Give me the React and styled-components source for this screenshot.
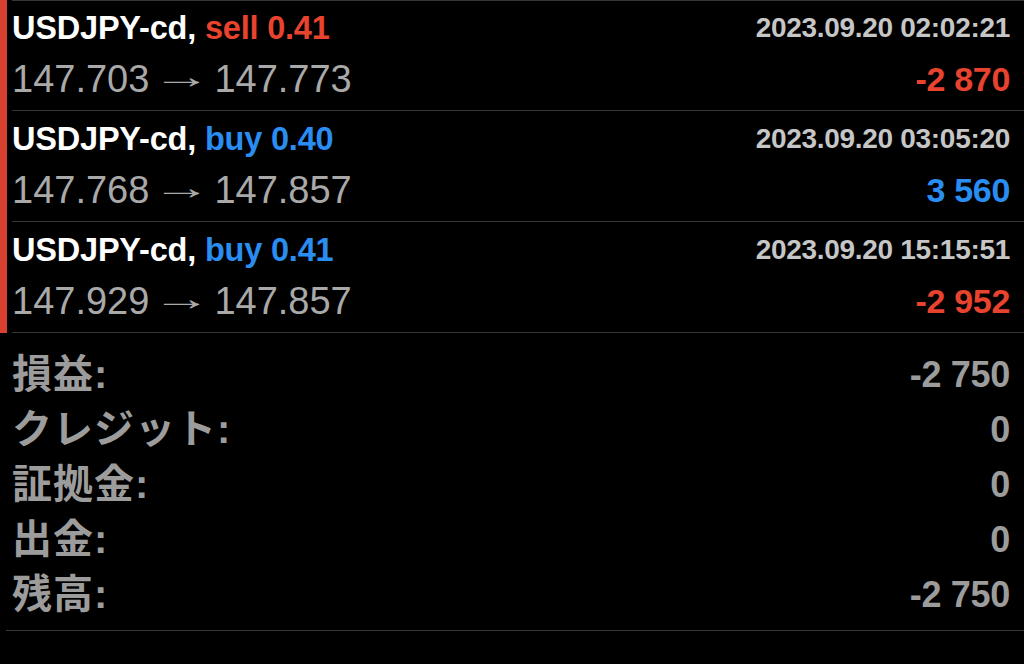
import React from 'react';
import styled, { createGlobalStyle } from 'styled-components';

const positions = [
  { symbol: 'USDJPY-cd', side: 'sell', volume: '0.41', time: '2023.09.20 02:02:21', open: '147.703', close: '147.773', profit: '-2 870' },
  { symbol: 'USDJPY-cd', side: 'buy', volume: '0.40', time: '2023.09.20 03:05:20', open: '147.768', close: '147.857', profit: '3 560' },
  { symbol: 'USDJPY-cd', side: 'buy', volume: '0.41', time: '2023.09.20 15:15:51', open: '147.929', close: '147.857', profit: '-2 952' },
];

const summary = [
  { label: '損益:', value: '-2 750' },
  { label: 'クレジット:', value: '0' },
  { label: '証拠金:', value: '0' },
  { label: '出金:', value: '0' },
  { label: '残高:', value: '-2 750' },
];

function App() {
  return (
    <>
      <GlobalStyle />
      <Page>
        <List>
          {positions.map((p, i) => (
            <Position key={i}>
              <Inner $first={i === 0}>
                <Line $h={50}>
                  <Title>
                    {p.symbol}, <Side $buy={p.side === 'buy'}>{p.side} {p.volume}</Side>
                  </Title>
                  <Time>{p.time}</Time>
                </Line>
                <Line $h={52}>
                  <Prices>
                    <span>{p.open}</span>
                    <Arrow>→</Arrow>
                    <span>{p.close}</span>
                  </Prices>
                  <Profit $neg={p.profit.startsWith('-')}>{p.profit}</Profit>
                </Line>
              </Inner>
            </Position>
          ))}
        </List>
        <Summary>
          {summary.map((s, i) => (
            <SummaryRow key={i}>
              <Label>{s.label}</Label>
              <Value>{s.value}</Value>
            </SummaryRow>
          ))}
        </Summary>
      </Page>
    </>
  );
}

export default App;

// **************Styling***************

const GlobalStyle = createGlobalStyle`
  body {
    margin: 0;
    background: #000;
    font-family: "Liberation Sans", Arial, sans-serif;
  }
`;

const Page = styled.div`
  width: 1024px;
  height: 664px;
  background: #000;
  overflow: hidden;
`;

const List = styled.div`
  display: flex;
  flex-direction: column;
`;

const Position = styled.div`
  border-left: 7px solid #d8402f;
`;

const Inner = styled.div`
  margin-left: 5px;
  padding: ${props => props.$first ? '2px' : '3px'} 14px 5px 0;
  border-top: ${props => props.$first ? '1px solid #363636' : 'none'};
  border-bottom: 1px solid #363636;
  display: flex;
  flex-direction: column;
`;

const Line = styled.div`
  height: ${props => props.$h}px;
  display: flex;
  align-items: center;
  justify-content: space-between;
`;

const Title = styled.div`
  color: #fff;
  font-size: 32.5px;
  font-weight: 700;
  letter-spacing: -0.2px;
  white-space: nowrap;
`;

const Side = styled.span`
  color: ${props => props.$buy ? '#2a8df2' : '#e8432f'};
`;

const Time = styled.div`
  color: #c6c6c6;
  font-size: 28px;
  font-weight: 700;
  letter-spacing: -0.3px;
`;

const Prices = styled.div`
  color: #a9a9a9;
  font-size: 38px;
  font-weight: 400;
  white-space: nowrap;
  display: flex;
  align-items: center;
`;

const Arrow = styled.span`
  display: inline-block;
  width: 65px;
  text-align: center;
  font-size: 34px;
  transform: translateY(-3px) scaleX(1.75);
  transform-origin: center center;
`;

const Profit = styled.div`
  color: ${props => props.$neg ? '#e8432f' : '#2a8df2'};
  font-size: 34px;
  font-weight: 700;
  letter-spacing: -0.3px;
`;

const Summary = styled.div`
  margin-left: 6px;
  padding: 14px 14px 8px 6px;
  border-bottom: 1px solid #363636;
  display: flex;
  flex-direction: column;
`;

const SummaryRow = styled.div`
  height: 55px;
  display: flex;
  align-items: center;
  justify-content: space-between;
`;

const Label = styled.div`
  color: #9c9c9c;
  font-family: "Liberation Sans", "Noto Sans CJK JP", sans-serif;
  font-size: 40px;
  font-weight: 700;
  letter-spacing: 1px;
  line-height: 55px;
`;

const Value = styled.div`
  color: #9c9c9c;
  font-size: 36px;
  font-weight: 700;
  letter-spacing: -0.3px;
`;
